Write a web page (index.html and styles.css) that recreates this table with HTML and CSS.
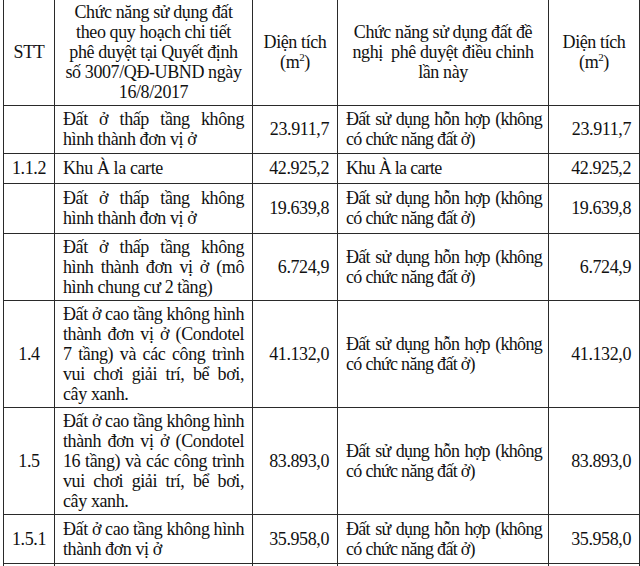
FILE: index.html
```html
<!DOCTYPE html>
<html lang="vi">
<head>
<meta charset="utf-8">
<title>Bảng chức năng sử dụng đất</title>
<link rel="stylesheet" href="styles.css">
</head>
<body>
<table class="landuse">
  <colgroup>
    <col class="c-stt">
    <col class="c-old">
    <col class="c-area">
    <col class="c-new">
    <col class="c-area2">
  </colgroup>
  <thead>
    <tr class="r-head">
      <th>STT</th>
      <th>Chức năng sử dụng đất<br>theo quy hoạch chi tiết<br>phê duyệt tại Quyết định<br>số 3007/QĐ-UBND ngày<br>16/8/2017</th>
      <th>Diện tích<br>(m<sup>2</sup>)</th>
      <th>Chức năng sử dụng đất đề<br>nghị&nbsp; phê duyệt điều chinh<br>lần này</th>
      <th>Diện tích<br>(m<sup>2</sup>)</th>
    </tr>
  </thead>
  <tbody>
    <tr class="r-48">
      <td class="stt"></td>
      <td class="txt"><span class="jl">Đất ở thấp tầng không</span><span class="ll">hình thành đơn vị ở</span></td>
      <td class="num">23.911,7</td>
      <td class="txt new"><span class="jl">Đất sử dụng hỗn hợp (không</span><span class="ll">có chức năng đất ở)</span></td>
      <td class="num">23.911,7</td>
    </tr>
    <tr class="r-30">
      <td class="stt">1.1.2</td>
      <td class="txt"><span class="ll">Khu À la carte</span></td>
      <td class="num">42.925,2</td>
      <td class="txt new"><span class="ll">Khu À la carte</span></td>
      <td class="num">42.925,2</td>
    </tr>
    <tr class="r-50">
      <td class="stt"></td>
      <td class="txt"><span class="jl">Đất ở thấp tầng không</span><span class="ll">hình thành đơn vị ở</span></td>
      <td class="num">19.639,8</td>
      <td class="txt new"><span class="jl">Đất sử dụng hỗn hợp (không</span><span class="ll">có chức năng đất ở)</span></td>
      <td class="num">19.639,8</td>
    </tr>
    <tr class="r-67">
      <td class="stt"></td>
      <td class="txt"><span class="jl">Đất ở thấp tầng không</span><span class="jl">hình thành đơn vị ở (mô</span><span class="ll">hình chung cư 2 tầng)</span></td>
      <td class="num">6.724,9</td>
      <td class="txt new"><span class="jl">Đất sử dụng hỗn hợp (không</span><span class="ll">có chức năng đất ở)</span></td>
      <td class="num">6.724,9</td>
    </tr>
    <tr class="r-107">
      <td class="stt">1.4</td>
      <td class="txt"><span class="jl">Đất ở cao tầng không hình</span><span class="jl">thành đơn vị ở (Condotel</span><span class="jl">7 tầng) và các công trình</span><span class="jl">vui chơi giải trí, bể bơi,</span><span class="ll">cây xanh.</span></td>
      <td class="num">41.132,0</td>
      <td class="txt new"><span class="jl">Đất sử dụng hỗn hợp (không</span><span class="ll">có chức năng đất ở)</span></td>
      <td class="num">41.132,0</td>
    </tr>
    <tr class="r-107">
      <td class="stt">1.5</td>
      <td class="txt"><span class="jl">Đất ở cao tầng không hình</span><span class="jl">thành đơn vị ở (Condotel</span><span class="jl">16 tầng) và các công trình</span><span class="jl">vui chơi giải trí, bể bơi,</span><span class="ll">cây xanh.</span></td>
      <td class="num">83.893,0</td>
      <td class="txt new"><span class="jl">Đất sử dụng hỗn hợp (không</span><span class="ll">có chức năng đất ở)</span></td>
      <td class="num">83.893,0</td>
    </tr>
    <tr class="r-49">
      <td class="stt">1.5.1</td>
      <td class="txt"><span class="jl">Đất ở cao tầng không hình</span><span class="ll">thành đơn vị ở</span></td>
      <td class="num">35.958,0</td>
      <td class="txt new"><span class="jl">Đất sử dụng hỗn hợp (không</span><span class="ll">có chức năng đất ở)</span></td>
      <td class="num">35.958,0</td>
    </tr>
    <tr class="r-next">
      <td class="stt"></td>
      <td class="txt"></td>
      <td class="num"></td>
      <td class="txt"></td>
      <td class="num"></td>
    </tr>
  </tbody>
</table>
</body>
</html>
```

FILE: styles.css
```css
html, body {
  margin: 0;
  padding: 0;
  background: #ffffff;
  overflow: hidden;
}

body {
  padding-left: 3px;
}

.landuse {
  border-collapse: collapse;
  table-layout: fixed;
  width: 636px;
  font-family: "Liberation Serif", "Times New Roman", serif;
  font-size: 18px;
  line-height: 20px;
  letter-spacing: -0.4px;
  color: #111111;
}

.c-stt { width: 51px; }
.c-old { width: 198px; }
.c-area { width: 85px; }
.c-new { width: 211px; }
.c-area2 { width: 91px; }

.landuse th,
.landuse td {
  border: 1px solid #2a2a2a;
  padding: 0 8px;
  vertical-align: middle;
}

.landuse th {
  border-top: none;
  font-weight: normal;
  text-align: center;
}

.landuse sup {
  font-size: 11px;
  line-height: 0;
  vertical-align: 7px;
}

.r-head { height: 105px; }
.r-48 { height: 48px; }
.r-30 { height: 30px; }
.r-50 { height: 50px; }
.r-67 { height: 67px; }
.r-107 { height: 107px; }
.r-49 { height: 49px; }
.r-next { height: 30px; }

.landuse td.stt {
  text-align: center;
  padding: 0 2px;
}

.landuse td.num {
  text-align: right;
}

.landuse td.txt {
  text-align: left;
}

.landuse td.new {
  padding: 0 6px 0 8px;
  letter-spacing: -0.7px;
}

.jl {
  display: block;
  text-align: justify;
  text-align-last: justify;
}

.ll {
  display: block;
  text-align: left;
}
```
